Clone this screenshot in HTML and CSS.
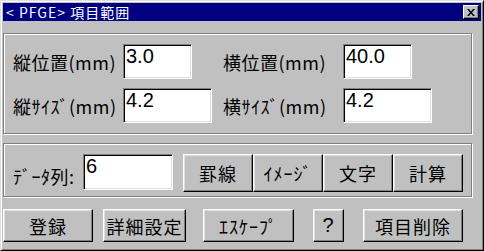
FILE: index.html
```html
<!DOCTYPE html>
<html lang="ja">
<head>
  <meta charset="UTF-8">
  <title>項目範囲</title>
  <link rel="stylesheet" href="styles.css">
</head>
<body>

  <div class="window">
    <div class="titlebar">
      <span class="title">&lt; PFGE&gt; 項目範囲</span>
      <div class="close-btn">
        <svg width="8" height="7" viewBox="0 0 8 7">
          <path d="M0 0h2l2 2.5 2-2.5h2l-3 3.5 3 3.5h-2l-2-2.5-2 2.5h-2l3-3.5z" fill="#000"/>
        </svg>
      </div>
    </div>

    <div class="group group-range">
      <div class="label">縦位置(mm)</div>
      <div class="field short">3.0</div>
      <div class="label">横位置(mm)</div>
      <div class="field short">40.0</div>

      <div class="label">縦ｻｲｽﾞ(mm)</div>
      <div class="field long">4.2</div>
      <div class="label">横ｻｲｽﾞ(mm)</div>
      <div class="field long">4.2</div>
    </div>

    <div class="group group-data">
      <div class="label data-label">ﾃﾞｰﾀ列:</div>
      <div class="field data-field">6</div>
      <div class="tool-buttons">
        <div class="btn tool">罫線</div>
        <div class="btn tool">ｲﾒｰｼﾞ</div>
        <div class="btn tool">文字</div>
        <div class="btn tool">計算</div>
      </div>
    </div>

    <div class="action-bar">
      <div class="btn act-save">登録</div>
      <div class="btn act-detail">詳細設定</div>
      <div class="btn act-escape">ｴｽｹｰﾌﾟ</div>
      <div class="btn act-help">?</div>
      <div class="btn act-delete">項目削除</div>
    </div>
  </div>

</body>
</html>
```

FILE: styles.css
```css
* {
  margin: 0;
  padding: 0;
  box-sizing: border-box;
}

body {
  background: #c0c0c0;
  font-family: "Noto Sans CJK JP", "Liberation Sans", sans-serif;
  color: #000;
}

.window {
  width: 484px;
  height: 251px;
  display: flex;
  flex-direction: column;
  background: #c0c0c0;
  border: 1px solid;
  border-color: #dfdfdf #000 #000 #dfdfdf;
  box-shadow: inset 1px 1px #fff, inset -1px -1px #808080;
  padding: 2px;
}

.titlebar {
  height: 18px;
  background: #000080;
  display: flex;
  align-items: center;
  justify-content: space-between;
  padding: 0 2px 0 3px;
}

.title {
  color: #fff;
  font-size: 14px;
  line-height: 18px;
  letter-spacing: 1px;
}

.close-btn {
  width: 16px;
  height: 14px;
  background: #c0c0c0;
  border: 1px solid;
  border-color: #fff #000 #000 #fff;
  box-shadow: inset -1px -1px #808080;
  display: flex;
  align-items: center;
  justify-content: center;
}

.group {
  width: 469px;
  border: 1px solid #808080;
  box-shadow: 1px 1px 0 #fff, inset 1px 1px 0 #fff;
}

.group-range {
  margin-top: 12px;
  height: 101px;
  padding: 10px 0 0 9px;
  display: grid;
  grid-template-columns: 110px 100px 120px auto;
  grid-template-rows: 35px 35px;
  row-gap: 9px;
  align-items: center;
}

.label {
  font-size: 18px;
  letter-spacing: 0.5px;
  white-space: nowrap;
}

.field {
  height: 35px;
  background: #fff;
  border: 1px solid;
  border-color: #808080 #fff #fff #808080;
  box-shadow: inset 1px 1px #000, inset -1px -1px #dfdfdf;
  font-family: "Liberation Sans", sans-serif;
  font-size: 20px;
  line-height: 20px;
  padding: 1px 2px;
}

.field.short {
  width: 69px;
}

.field.long {
  width: 89px;
}

.group-data {
  margin-top: 9px;
  height: 54px;
  padding: 10px 0 0 9px;
  display: flex;
  align-items: flex-start;
}

.data-label {
  width: 70px;
  padding-top: 9px;
}

.data-field {
  width: 90px;
  height: 36px;
}

.tool-buttons {
  display: flex;
  margin-left: 10px;
}

.btn {
  background: #c0c0c0;
  border: 1px solid;
  border-color: #fff #000 #000 #fff;
  box-shadow: inset -1px -1px #808080, inset 1px 1px #dfdfdf;
  display: flex;
  align-items: center;
  justify-content: center;
  font-size: 18px;
  letter-spacing: 1px;
  white-space: nowrap;
}

.btn.tool {
  width: 70px;
  height: 38px;
}

.action-bar {
  display: flex;
  margin-top: 12px;
  height: 33px;
}

.action-bar .btn {
  height: 33px;
}

.act-save {
  width: 90px;
}

.act-detail {
  width: 83px;
  margin-left: 10px;
}

.act-escape {
  width: 91px;
  margin-left: 17px;
}

.act-help {
  width: 31px;
  margin-left: 19px;
  font-family: "Liberation Sans", sans-serif;
  font-size: 20px;
}

.act-delete {
  width: 100px;
  margin-left: 19px;
}
```
